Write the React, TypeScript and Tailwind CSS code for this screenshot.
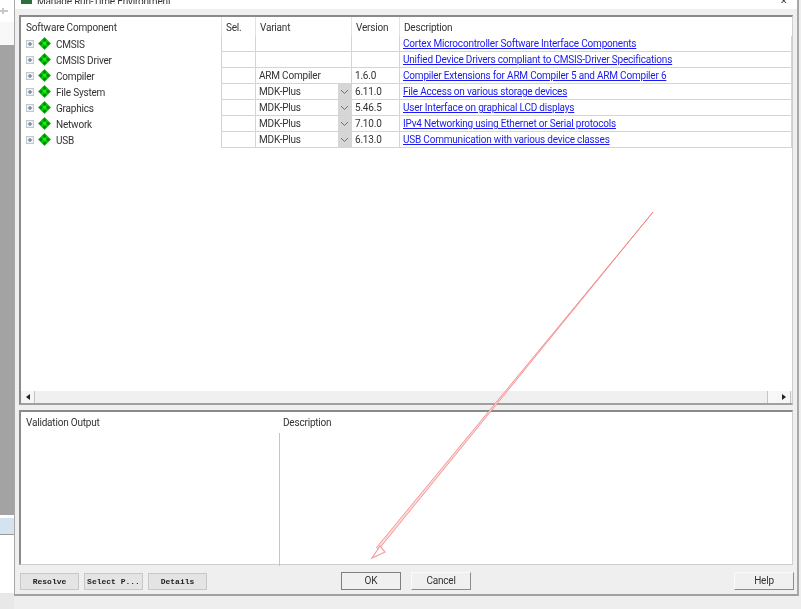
const rows = [
  { name: "CMSIS", variant: "", version: "", select: false, desc: "Cortex Microcontroller Software Interface Components" },
  { name: "CMSIS Driver", variant: "", version: "", select: false, desc: "Unified Device Drivers compliant to CMSIS-Driver Specifications" },
  { name: "Compiler", variant: "ARM Compiler", version: "1.6.0", select: false, desc: "Compiler Extensions for ARM Compiler 5 and ARM Compiler 6" },
  { name: "File System", variant: "MDK-Plus", version: "6.11.0", select: true, desc: "File Access on various storage devices" },
  { name: "Graphics", variant: "MDK-Plus", version: "5.46.5", select: true, desc: "User Interface on graphical LCD displays" },
  { name: "Network", variant: "MDK-Plus", version: "7.10.0", select: true, desc: "IPv4 Networking using Ethernet or Serial protocols" },
  { name: "USB", variant: "MDK-Plus", version: "6.13.0", select: true, desc: "USB Communication with various device classes" },
];

const cell = "h-4 border-r border-b border-[#d4d4d4] text-[10px] leading-[15px] whitespace-nowrap overflow-hidden";
const head = "h-[19px] text-[10px] leading-[21px]";

function Expander() {
  return (
    <svg width="8" height="8" viewBox="0 0 8 8" className="shrink-0">
      <rect x="0.5" y="0.5" width="7" height="7" fill="#eef0f6" stroke="#c3c7d0" />
      <path d="M2 4h4M4 2v4" stroke="#5a6a8a" />
    </svg>
  );
}

function GreenDiamond() {
  return (
    <svg width="13" height="13" viewBox="0 0 13 13" className="shrink-0">
      <path d="M6.5 0L13 6.5L6.5 13L0 6.5Z" fill="#0ac80a" />
      <path d="M6.5 1L8.5 3L6.5 5L4.5 3ZM6.5 8L8.5 10L6.5 12L4.5 10ZM3 4.5L5 6.5L3 8.5L1 6.5ZM10 4.5L12 6.5L10 8.5L8 6.5Z" fill="#068a06" />
      <path d="M6.5 4.5L8.5 6.5L6.5 8.5L4.5 6.5Z" fill="#19f019" />
    </svg>
  );
}

function DropButton() {
  return (
    <span className="flex h-full w-[13px] shrink-0 items-center justify-center bg-[#d6d6d6]">
      <svg width="9" height="6" viewBox="0 0 9 6">
        <path d="M1 1l3.5 3.5L8 1" fill="none" stroke="#707070" />
      </svg>
    </span>
  );
}

function ScrollButton({ dir }: { dir: "left" | "right" }) {
  return (
    <span className="flex h-[12px] w-[13px] items-center justify-center border-r border-[#c4c4c4] bg-[#f6f6f6]">
      <svg width="4" height="6" viewBox="0 0 4 6">
        <path d={dir === "left" ? "M4 0v6L0 3z" : "M0 0v6l4-3z"} fill="#222" />
      </svg>
    </span>
  );
}

function OldButton({ label }: { label: string }) {
  return (
    <button className="h-[17px] w-[59px] border border-[#c8c8c8] bg-[#e4e4e4] font-['Liberation_Mono',monospace] text-[8px] font-bold leading-[15px] tracking-normal whitespace-nowrap text-[#222]">
      {label}
    </button>
  );
}

function NativeButton({ label, strong }: { label: string; strong?: boolean }) {
  return (
    <button
      className={
        "block h-[18px] w-[60px] border-t border-r border-b border-l border-t-[#fafafa] border-r-[#8c8c8c] border-b-[#8c8c8c] border-l-[#fafafa] bg-[#f0f0f0] text-[10px] leading-[16px] text-[#333] " +
        (strong ? "outline outline-1 -outline-offset-1 outline-[#808080]" : "")
      }
    >
      {label}
    </button>
  );
}

export default function App() {
  return (
    <div className="relative flex h-[609px] w-[801px] overflow-hidden bg-[#eeeeee] font-['Roboto',Arial,sans-serif] tracking-[-0.2px] text-[#333] blur-[0.5px]">
      {/* window behind the dialog */}
      <div className="flex h-full w-[14px] shrink-0 flex-col">
        <div className="flex h-[22px] items-center bg-white">
          <svg width="8" height="6" viewBox="0 0 8 6">
            <path d="M0 3h8M3 0v6" stroke="#c8c8c8" strokeWidth="2" />
          </svg>
        </div>
        <div className="h-[23px] bg-[#f8f8f8]" />
        <div className="h-[470px] bg-[#a3a3a3]" />
        <div className="h-[3px] bg-white" />
        <div className="h-[17px] border-b border-[#9a9a9a] bg-[#d5e2ef]" />
        <div className="h-[58px] bg-white" />
        <div className="flex-1 bg-[#e8e8e8]" />
      </div>

      {/* dialog */}
      <div className="flex h-[596px] w-[785px] flex-col border-r-2 border-b-2 border-l border-r-[#a8a8a8] border-b-[#a0a0a0] border-l-[#a8a8a8] bg-[#efefef]">
        <div className="flex h-[9px] shrink-0 items-start justify-between bg-white pr-[9px] pl-[6px]">
          <div className="flex items-start gap-[5px]">
            <span className="h-[4px] w-[11px] bg-[#2f6f3e]" />
            <span className="h-[4px] overflow-hidden text-[10px] leading-[4px] whitespace-nowrap text-[#333]">Manage Run-Time Environment</span>
          </div>
          <span className="h-[3px] overflow-hidden text-[9px] leading-[3px] text-[#333]">✕</span>
        </div>

        <div className="flex flex-1 flex-col pt-[6px] pr-[4px] pl-[4px]">
          {/* component tree */}
          <div className="flex h-[390px] flex-col border-t-2 border-r border-b-2 border-l-2 border-t-[#8a8a8a] border-r-[#cfcfcf] border-b-[#a0a0a0] border-l-[#8a8a8a] bg-white">
            <div className="flex-1">
              <div className="grid grid-cols-[200px_35px_96px_48px_1fr]">
                <div className={head + " pl-[5px]"}>Software Component</div>
                <div className={head + " border-r border-l border-[#e2e2e2] pl-[4px]"}>Sel.</div>
                <div className={head + " border-r border-[#e2e2e2] pl-[4px]"}>Variant</div>
                <div className={head + " border-r border-[#e2e2e2] pl-[4px]"}>Version</div>
                <div className={head + " pl-[4px]"}>Description</div>
                {rows.map((r) => (
                  <div key={r.name} className="contents">
                    <div className="flex h-4 items-center pl-[5px] text-[10px] leading-[15px]">
                      <Expander />
                      <span className="mb-[2px] ml-[4px] flex"><GreenDiamond /></span>
                      <span className="ml-[5px]">{r.name}</span>
                    </div>
                    <div className={cell + " border-l"} />
                    <div className={cell + " flex items-center justify-between pl-[3px]"}>
                      <span>{r.variant}</span>
                      {r.select && <DropButton />}
                    </div>
                    <div className={cell + " pl-[3px]"}>{r.version}</div>
                    <div className={cell + " pl-[3px] text-[#1a1aee] underline"}>{r.desc}</div>
                  </div>
                ))}
              </div>
            </div>
            <div className="flex h-[12px] items-center bg-[#f0f0f0] px-[1px]">
              <ScrollButton dir="left" />
              <span className="h-full flex-1 border-r border-[#c4c4c4]" />
              <span className="h-full w-[10px] bg-[#f8f8f8]" />
              <ScrollButton dir="right" />
            </div>
          </div>

          {/* validation output */}
          <div className="mt-[5px] flex h-[155px] border-t-2 border-r border-b border-l-2 border-t-[#8a8a8a] border-r-[#cfcfcf] border-b-[#cfcfcf] border-l-[#8a8a8a] bg-white">
            <div className="w-[258px] pt-[3px] pl-[5px] text-[10px] leading-[15px]">Validation Output</div>
            <div className="flex-1 pt-[3px] text-[10px] leading-[15px]">
              <div className="pl-[4px]">Description</div>
              <div className="mt-[3px] h-[133px] border-l border-[#c4c4c4]" />
            </div>
          </div>

          {/* buttons */}
          <div className="flex items-center pt-[7px]">
            <div className="flex w-[322px] gap-[5px] pl-[1px]">
              <OldButton label="Resolve" />
              <OldButton label="Select P..." />
              <OldButton label="Details" />
            </div>
            <NativeButton label="OK" strong />
            <div className="ml-[10px]"><NativeButton label="Cancel" /></div>
            <div className="-mr-[1px] ml-auto"><NativeButton label="Help" /></div>
          </div>
        </div>
      </div>

      {/* annotation arrow drawn on top of the screenshot */}
      <svg className="absolute top-0 left-0" width="801" height="609" viewBox="0 0 801 609">
        <path d="M653 212L378.5 549.5L376.5 547.5Z" fill="#fbdcdc" stroke="#f27070" strokeWidth="0.7" />
        <path d="M380 546L372 558L385 552Z" fill="#fff" stroke="#f4a0a0" strokeWidth="1.2" />
      </svg>
    </div>
  );
}
